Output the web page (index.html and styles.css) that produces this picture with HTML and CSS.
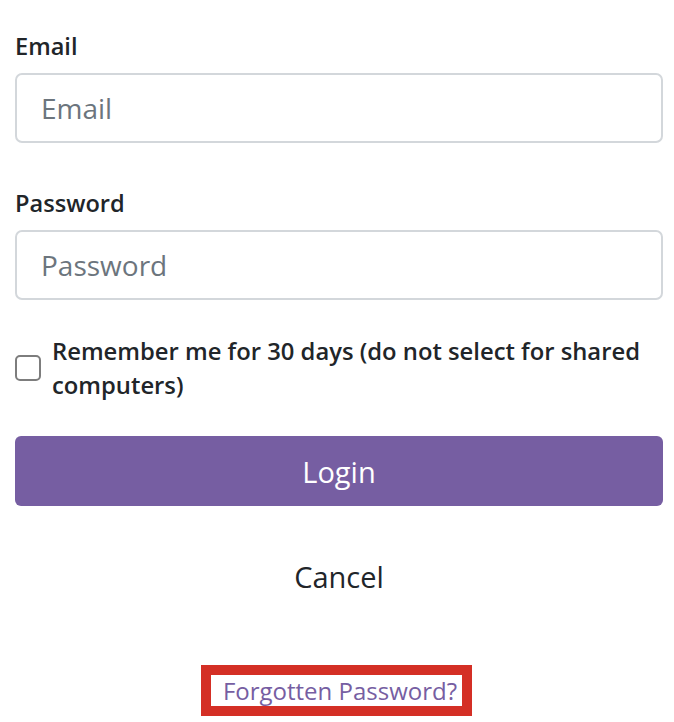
FILE: index.html
```html
<!DOCTYPE html>
<html lang="en">
<head>
<meta charset="utf-8">
<title>Login</title>
<link rel="stylesheet" href="styles.css">
</head>
<body>
<form class="login">
  <div class="group">
    <label class="label" for="email">Email</label>
    <input class="field" id="email" type="text" placeholder="Email">
  </div>
  <div class="group">
    <label class="label" for="password">Password</label>
    <input class="field" id="password" type="password" placeholder="Password">
  </div>
  <label class="remember">
    <span class="box"></span>
    <span class="remember-text">Remember me for 30 days (do not select for shared computers)</span>
  </label>
  <button class="btn-login" type="button">Login</button>
  <div class="cancel">Cancel</div>
  <div class="forgot-row">
    <a class="forgot" href="#">Forgotten Password?</a>
  </div>
</form>
</body>
</html>
```

FILE: styles.css
```css
html, body {
  margin: 0;
  padding: 0;
  background: #ffffff;
}
body {
  font-family: "Open Sans", "Noto Sans", sans-serif;
  color: #212529;
  width: 674px;
  height: 722px;
  overflow: hidden;
}
.login {
  padding: 30px 11px 0 15px;
  display: flex;
  flex-direction: column;
}
.group {
  display: flex;
  flex-direction: column;
  margin-bottom: 44px;
}
.label {
  font-size: 23.6px;
  font-weight: 600;
  line-height: 33px;
  margin-bottom: 10px;
}
.field {
  box-sizing: border-box;
  height: 70px;
  width: 100%;
  border: 2px solid #d3d7db;
  border-radius: 7px;
  padding: 0 24px;
  font-family: "Open Sans", "Noto Sans", sans-serif;
  font-size: 28px;
  color: #212529;
  outline: none;
  background: #fff;
}
.field::placeholder {
  color: #6c757d;
}
.group:nth-child(2) {
  margin-bottom: 34px;
}
.remember {
  display: flex;
  align-items: center;
  gap: 11px;
}
.box {
  box-sizing: border-box;
  flex: 0 0 26px;
  width: 26px;
  height: 26px;
  border: 2px solid #7d7d7d;
  border-radius: 5px;
  background: #fff;
}
.remember-text {
  font-size: 23.8px;
  font-weight: 600;
  line-height: 34px;
}
.btn-login {
  margin-top: 34px;
  height: 70px;
  width: 100%;
  border: none;
  border-radius: 6px;
  background: #765ea2;
  color: #ffffff;
  font-family: "Open Sans", "Noto Sans", sans-serif;
  font-size: 29px;
  padding: 0;
}
.cancel {
  margin-top: 35px;
  height: 70px;
  display: flex;
  align-items: center;
  justify-content: center;
  font-size: 29px;
}
.forgot-row {
  margin-top: 54px;
  display: flex;
  justify-content: center;
  padding-right: 5px;
}
.forgot {
  display: inline-block;
  border: 10px solid #d42f25;
  padding: 0 5px 0 12px;
  line-height: 31px;
  font-size: 24px;
  color: #765ea2;
  text-decoration: none;
}
```
